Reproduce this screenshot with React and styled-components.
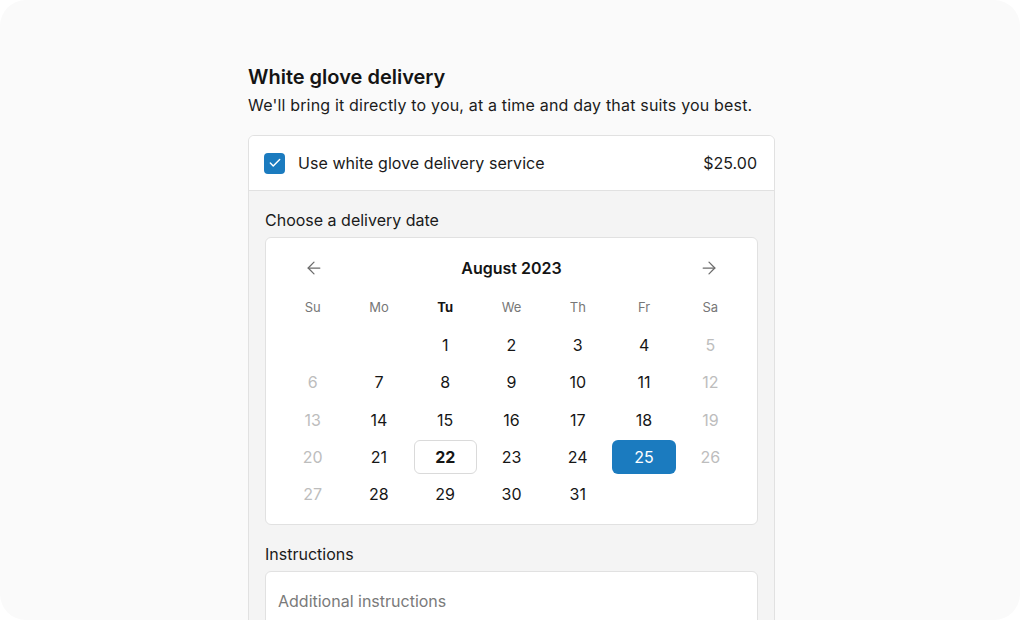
import React, { useState } from 'react';
import styled, { createGlobalStyle } from 'styled-components';
import { ArrowLeft, ArrowRight, Check } from 'lucide-react';

const GlobalStyle = createGlobalStyle`
    html, body {
        margin: 0;
        padding: 0;
        background: #ffffff;
    }
    body {
        font-family: Inter, "Noto Sans", "Liberation Sans", sans-serif;
        color: #161616;
        -webkit-font-smoothing: antialiased;
    }
`;

const Frame = styled.div`
    width: 1020px;
    height: 620px;
    background: #fafafa;
    border-radius: 26px;
    overflow: hidden;
    box-sizing: border-box;
    padding: 65px 0 0 248px;
`;

const Column = styled.div`
    width: 527px;
    display: flex;
    flex-direction: column;
`;

const Title = styled.h2`
    margin: 0;
    font-size: 20px;
    line-height: 25px;
    font-weight: 600;
    color: #141414;
`;

const Subtitle = styled.p`
    margin: 3px 0 0 0;
    font-size: 16px;
    line-height: 24px;
    letter-spacing: 0.18px;
    color: #1c1c1c;
`;

const Card = styled.div`
    margin-top: 18px;
    border: 1px solid #e1e1e1;
    border-radius: 6px;
    overflow: hidden;
    background: #f4f4f4;
`;

const OptionRow = styled.label`
    display: flex;
    align-items: center;
    height: 54px;
    padding: 0 17px 0 15px;
    background: #ffffff;
    border-bottom: 1px solid #e1e1e1;
    font-size: 16px;
    color: #1a1a1a;
`;

const Checkbox = styled.span`
    width: 21px;
    height: 21px;
    border-radius: 4px;
    background: ${props => (props.$checked ? '#1b7bbf' : '#ffffff')};
    border: ${props => (props.$checked ? 'none' : '1px solid #bbb')};
    display: flex;
    align-items: center;
    justify-content: center;
    color: #fff;
    margin-right: 13px;
    flex-shrink: 0;
`;

const OptionText = styled.span`
    flex: 1;
    letter-spacing: 0.05px;
`;

const Price = styled.span`
    font-size: 16px;
`;

const Section = styled.div`
    padding: 17px 16px 0 16px;
    display: flex;
    flex-direction: column;
`;

const FieldLabel = styled.div`
    font-size: 16px;
    line-height: 24px;
    color: #1a1a1a;
    margin-bottom: 5px;
`;

const Calendar = styled.div`
    background: #ffffff;
    border: 1px solid #e1e1e1;
    border-radius: 6px;
    padding: 14px 15px 13px 15px;
    margin-bottom: 17px;
`;

const CalHeader = styled.div`
    display: flex;
    align-items: center;
    height: 32px;
`;

const NavButton = styled.button`
    width: 66px;
    height: 32px;
    border: none;
    background: none;
    padding: 0;
    display: flex;
    align-items: center;
    justify-content: center;
    color: #6b6b6b;
    cursor: pointer;
`;

const MonthTitle = styled.div`
    flex: 1;
    text-align: center;
    font-size: 16px;
    font-weight: 600;
    color: #141414;
`;

const Grid = styled.div`
    display: grid;
    grid-template-columns: repeat(7, 1fr);
    column-gap: 3px;
`;

const WeekRow = styled(Grid)`
    margin-top: 13px;
    margin-bottom: 11px;
`;

const WeekDay = styled.div`
    text-align: center;
    font-size: 13px;
    line-height: 20px;
    color: ${props => (props.$today ? '#141414' : '#777777')};
    font-weight: ${props => (props.$today ? 700 : 400)};
`;

const DayGrid = styled(Grid)`
    row-gap: 3.25px;
    grid-auto-rows: 34px;
`;

const Day = styled.div`
    display: flex;
    align-items: center;
    justify-content: center;
    border-radius: 6px;
    font-size: 16px;
    box-sizing: border-box;
    color: ${props => (props.$selected ? '#ffffff' : props.$muted ? '#bdbdbd' : '#161616')};
    background: ${props => (props.$selected ? '#1b7bbf' : 'transparent')};
    border: 1px solid ${props => (props.$today ? '#dadada' : 'transparent')};
    font-weight: ${props => (props.$today ? 700 : 400)};
`;

const TextArea = styled.div`
    background: #ffffff;
    border: 1px solid #e1e1e1;
    border-radius: 6px;
    height: 80px;
    padding: 17px 12px;
    font-size: 16px;
    line-height: 24px;
    color: #7a7a7a;
`;

const weekDays = ['Su', 'Mo', 'Tu', 'We', 'Th', 'Fr', 'Sa'];

export default function App() {
    const [checked] = useState(true);
    const cells = [null, null];
    for (let d = 1; d <= 31; d++) cells.push(d);

    return (
        <>
            <GlobalStyle />
            <Frame>
                <Column>
                    <Title>White glove delivery</Title>
                    <Subtitle>We'll bring it directly to you, at a time and day that suits you best.</Subtitle>
                    <Card>
                        <OptionRow>
                            <Checkbox $checked={checked}>
                                {checked && <Check size={14} strokeWidth={2.5} />}
                            </Checkbox>
                            <OptionText>Use white glove delivery service</OptionText>
                            <Price>$25.00</Price>
                        </OptionRow>
                        <Section>
                            <FieldLabel>Choose a delivery date</FieldLabel>
                            <Calendar>
                                <CalHeader>
                                    <NavButton aria-label="Previous month">
                                        <ArrowLeft size={20} strokeWidth={1.5} />
                                    </NavButton>
                                    <MonthTitle>August 2023</MonthTitle>
                                    <NavButton aria-label="Next month">
                                        <ArrowRight size={20} strokeWidth={1.5} />
                                    </NavButton>
                                </CalHeader>
                                <WeekRow>
                                    {weekDays.map(w => (
                                        <WeekDay key={w} $today={w === 'Tu'}>{w}</WeekDay>
                                    ))}
                                </WeekRow>
                                <DayGrid>
                                    {cells.map((d, i) => {
                                        if (d === null) return <div key={'e' + i} />;
                                        const col = i % 7;
                                        const muted = col === 0 || col === 6;
                                        return (
                                            <Day key={d} $muted={muted} $today={d === 22} $selected={d === 25}>
                                                {d}
                                            </Day>
                                        );
                                    })}
                                </DayGrid>
                            </Calendar>
                            <FieldLabel>Instructions</FieldLabel>
                            <TextArea>Additional instructions</TextArea>
                        </Section>
                    </Card>
                </Column>
            </Frame>
        </>
    );
}
